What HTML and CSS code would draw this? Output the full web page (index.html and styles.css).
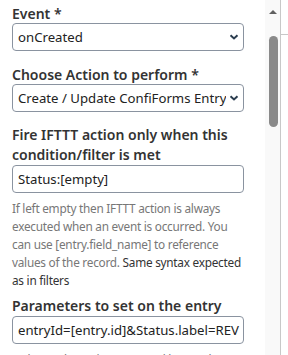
FILE: index.html
```html
<!DOCTYPE html>
<html>
<head>
  <title>IFTTT action</title>
  <link rel="stylesheet" href="styles.css">
</head>
<body>
  <div class="frame">
    <div class="content">
      <div class="field">
        <label>Event *</label>
        <div class="select">
          <span>onCreated</span>
          <svg class="chev" width="10" height="6" viewBox="0 0 10 6"><path d="M1.5 1.2 L5 4.5 L8.5 1.2" fill="none" stroke="#2c3e50" stroke-width="2"/></svg>
        </div>
      </div>

      <div class="field">
        <label>Choose Action to perform *</label>
        <div class="select">
          <span>Create / Update ConfiForms Entry</span>
          <svg class="chev" width="10" height="6" viewBox="0 0 10 6"><path d="M1.5 1.2 L5 4.5 L8.5 1.2" fill="none" stroke="#2c3e50" stroke-width="2"/></svg>
        </div>
      </div>

      <div class="field with-help">
        <label>Fire IFTTT action only when this condition/filter is met</label>
        <div class="input">Status:[empty]</div>
        <p class="help">If left empty then IFTTT action is always executed when an event is occurred. You can use [entry.field_name] to reference values of the record. <span class="dark">Same syntax expected as in filters</span></p>
      </div>

      <div class="field with-help">
        <label>Parameters to set on the entry</label>
        <div class="input">entryId=[entry.id]&amp;Status.label=REV</div>
        <p class="help">As key=value pairs separated by &amp;. When</p>
      </div>
    </div>

    <div class="scrollbar">
      <div class="arrow"></div>
      <div class="thumb"></div>
    </div>

    <div class="side">
      <div class="side-top"></div>
    </div>
  </div>
</body>
</html>
```

FILE: styles.css
```css
body {
  margin: 0;
  background: #fff;
  font-family: "Noto Sans", "Open Sans", sans-serif;
  color: #333;
}

.frame {
  display: flex;
  height: 355px;
  overflow: hidden;
}

.content {
  flex: 0 0 265px;
  min-width: 0;
  box-sizing: border-box;
  padding: 4px 21px 0 12px;
}

.field {
  margin-bottom: 14px;
}

.field + .field.with-help {
  margin-top: 2px;
}

.field.with-help {
  margin-bottom: 8px;
}

label {
  display: block;
  font-size: 14px;
  font-weight: 600;
  line-height: 19px;
  color: #333;
}

.with-help label {
  line-height: 20px;
  margin-top: -1px;
}

.select,
.input {
  box-sizing: border-box;
  height: 28px;
  border: 1px solid #8a93a0;
  border-radius: 4px;
  padding: 0 5px;
  font-size: 13.2px;
  line-height: 26px;
  color: #222;
  white-space: nowrap;
  overflow: hidden;
}

.select {
  display: flex;
  align-items: center;
  justify-content: space-between;
  gap: 2px;
  padding-right: 4px;
}

.select span {
  overflow: hidden;
}

.chev {
  flex: 0 0 10px;
}

.help {
  margin: 6px 0 0;
  font-size: 11.8px;
  letter-spacing: -0.25px;
  line-height: 18px;
  color: #777;
}

.help .dark {
  color: #333;
}

.scrollbar {
  flex: 0 0 15px;
  background: #f9f9f9;
  display: flex;
  flex-direction: column;
  align-items: center;
  padding-top: 10px;
  box-sizing: border-box;
}

.arrow {
  width: 0;
  height: 0;
  border-left: 4px solid transparent;
  border-right: 4px solid transparent;
  border-bottom: 4px solid #606060;
  margin-left: 1px;
}

.thumb {
  width: 9px;
  height: 91px;
  margin-top: 22px;
  margin-left: 1px;
  border-radius: 5px;
  background: #8a8a8a;
}

.side {
  flex: 1;
  border-left: 1px solid #c8c8c8;
}

.side-top {
  height: 34px;
  border-bottom: 1px solid #c8c8c8;
}
```
